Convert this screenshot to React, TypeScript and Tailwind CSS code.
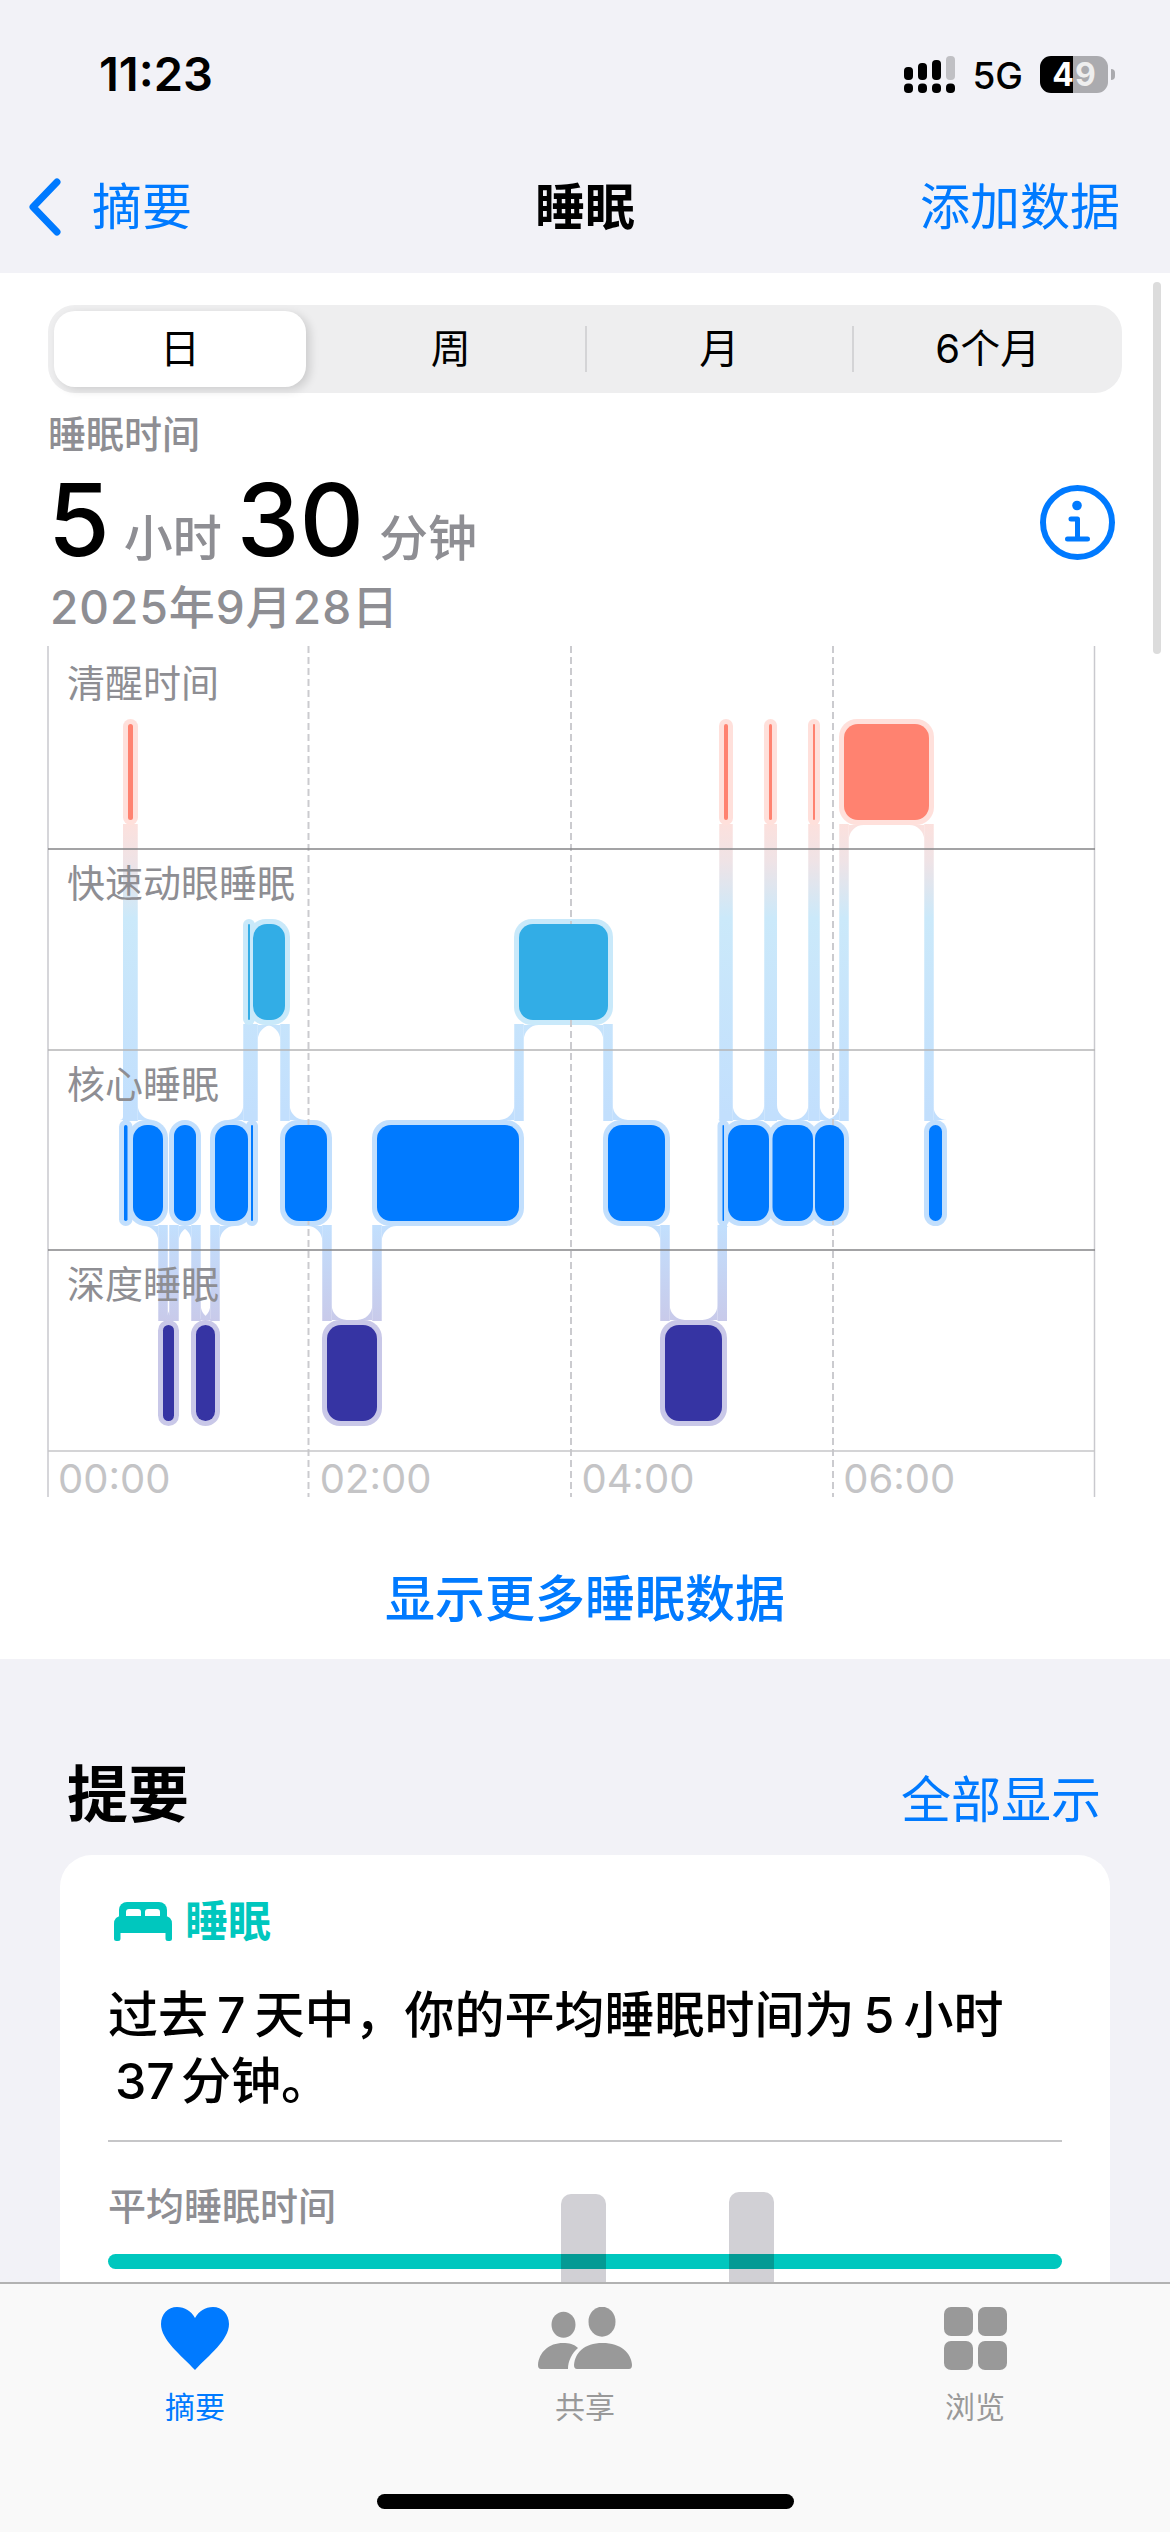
import React from 'react';

type Stage = 'awake' | 'rem' | 'core' | 'deep';

const STAGE_TOP: Record<Stage, number> = { awake: 724, rem: 924, core: 1125, deep: 1325 };
const BAR_H = 96;
const HALO = 5;
const LINK = 4.75;

const SOLID: Record<Stage, string> = {
  awake: '#ff8270',
  rem: '#32ade6',
  core: '#007aff',
  deep: '#3634a3',
};
const HALO_COLOR: Record<Stage, string> = {
  awake: '#ffe0db',
  rem: '#c9e9fa',
  core: '#c2dffd',
  deep: '#c9c8e8',
};

// sleep segments in time order, x positions in page pixels
const segments: [number, number, Stage][] = [
  [124, 127.5, 'core'],
  [128, 133, 'awake'],
  [133, 163, 'core'],
  [163, 174, 'deep'],
  [174, 196, 'core'],
  [196, 215, 'deep'],
  [215, 248, 'core'],
  [248, 250, 'rem'],
  [251, 253, 'core'],
  [253, 285, 'rem'],
  [285, 327, 'core'],
  [327, 377, 'deep'],
  [377, 519, 'core'],
  [519, 608, 'rem'],
  [608, 665, 'core'],
  [665, 722, 'deep'],
  [722.5, 724, 'core'],
  [724, 728, 'awake'],
  [728, 769, 'core'],
  [769, 772, 'awake'],
  [772.5, 813, 'core'],
  [813, 815, 'awake'],
  [815, 844, 'core'],
  [844, 929, 'awake'],
  [929, 942, 'core'],
];

function fillet(x: number, y: number, dx: number, dy: number, r: number) {
  const sweep = dx * dy > 0 ? 0 : 1;
  return `M${x} ${y}L${x + dx * r} ${y}A${r} ${r} 0 0 ${sweep} ${x} ${y + dy * r}Z`;
}

function SleepChart() {
  const links = segments.slice(1).map((b, i) => {
    const a = segments[i];
    const mid = (a[1] + b[0]) / 2;
    const aUpper = STAGE_TOP[a[2]] < STAGE_TOP[b[2]];
    const upper = aUpper ? a : b;
    const lower = aUpper ? b : a;
    const top = STAGE_TOP[upper[2]] + BAR_H + HALO;
    const bottom = STAGE_TOP[lower[2]] - HALO;
    const upperSide = aUpper ? -1 : 1;
    const lowerSide = -upperSide;
    const r1 = Math.min(15, upper[1] - upper[0]);
    const r2 = Math.min(15, lower[1] - lower[0]);
    return {
      x: mid - LINK,
      y: top - 1,
      h: bottom - top + 2,
      d:
        fillet(mid + upperSide * LINK, top, upperSide, 1, r1) +
        fillet(mid + lowerSide * LINK, bottom, lowerSide, -1, r2),
    };
  });

  return (
    <svg width="1170" height="851" viewBox="0 646 1170 851" className="absolute left-[-48px] top-0">
      <defs>
        <linearGradient id="link" gradientUnits="userSpaceOnUse" x1="0" y1="815" x2="0" y2="1330">
          <stop offset="0" stopColor="#ffe0db" />
          <stop offset="0.09" stopColor="#efe3e6" />
          <stop offset="0.2" stopColor="#cbe9fa" />
          <stop offset="0.58" stopColor="#c2dffd" />
          <stop offset="0.8" stopColor="#c2dffd" />
          <stop offset="1" stopColor="#c9c8e8" />
        </linearGradient>
      </defs>
      {links.map((l, i) => (
        <g key={i} fill="url(#link)">
          <rect x={l.x} y={l.y} width={LINK * 2} height={l.h} />
          <path d={l.d} />
        </g>
      ))}
      {segments.map(([x0, x1, stage], i) => {
        const w = x1 - x0 + HALO * 2;
        return (
          <rect
            key={i}
            x={x0 - HALO}
            y={STAGE_TOP[stage] - HALO}
            width={w}
            height={BAR_H + HALO * 2}
            rx={Math.min(w / 2, 18)}
            fill={HALO_COLOR[stage]}
          />
        );
      })}
      {[308.5, 571, 833].map(x => (
        <line key={x} x1={x} x2={x} y1="646" y2="1497" stroke="#cbcbcf" strokeWidth="2" strokeDasharray="7 4" />
      ))}
      <line x1="48" x2="48" y1="646" y2="1497" stroke="#c9c9ce" strokeWidth="1.5" />
      <line x1="1094.5" x2="1094.5" y1="646" y2="1497" stroke="#c9c9ce" strokeWidth="1.5" />
      <line x1="48" x2="1095" y1="849" y2="849" stroke="#858587" strokeWidth="1.3" />
      <line x1="48" x2="1095" y1="1050" y2="1050" stroke="#b4b4b6" strokeWidth="1.6" />
      <line x1="48" x2="1095" y1="1250" y2="1250" stroke="#858587" strokeWidth="1.3" />
      <line x1="48" x2="1095" y1="1451" y2="1451" stroke="#c6c6c8" strokeWidth="1.6" />
      {segments.map(([x0, x1, stage], i) => {
        const w = x1 - x0;
        return (
          <rect
            key={i}
            x={x0}
            y={STAGE_TOP[stage]}
            width={w}
            height={BAR_H}
            rx={Math.min(w / 2, 14)}
            fill={SOLID[stage]}
          />
        );
      })}
    </svg>
  );
}

function SignalIcon() {
  const xs = [0, 14, 28, 42];
  const tops = [11, 7, 4, 0];
  return (
    <svg width="51" height="37" viewBox="0 0 51 37">
      {xs.map((x, i) => (
        <g key={x}>
          <rect x={x} y={tops[i]} width="9" height={24 - tops[i]} rx="4" fill={i === 3 ? '#c0c0c4' : '#000'} />
          <rect x={x} y="27.5" width="9" height="9.5" rx="4" fill="#000" />
        </g>
      ))}
    </svg>
  );
}

function Battery() {
  return (
    <div className="flex items-center">
      <div className="flex h-[37px] w-[68px] items-center justify-center rounded-[11px] bg-[linear-gradient(90deg,#000_0,#000_33px,#ababaf_33px,#ababaf_100%)] text-[32px] leading-none font-bold text-white">
        <span className="mr-[1px]">4</span>
        <span className="text-[#eeeeee]">9</span>
      </div>
      <div className="ml-[3px] h-[11px] w-[4px] rounded-r-full bg-[#ababaf]" />
    </div>
  );
}

function BedIcon() {
  return (
    <svg width="58" height="39" viewBox="0 0 58 39" fill="#00c7be">
      <rect x="5" y="0" width="48" height="22" rx="8" />
      <path d="M12 14V10Q12 7 15 7H24Q27 7 27 10V14Z M31 14V10Q31 7 34 7H43Q46 7 46 10V14Z" fill="#ffffff" />
      <path d="M0 22Q0 14 8 14H50Q58 14 58 22V36.5Q58 39 55.5 39H54Q51.500 39 51.500 36.500V31H6.500V36.500Q6.500 39 4 39H2.500Q0 39 0 36.500Z" />
    </svg>
  );
}

function InfoIcon() {
  return (
    <svg width="75" height="75" viewBox="0 0 75 75" fill="none">
      <circle cx="37.500" cy="37.500" r="34.500" stroke="#007aff" strokeWidth="6" />
      <circle cx="37" cy="20.500" r="4.800" fill="#007aff" />
      <path d="M31 34H37.500V54M27.500 54H47.500" stroke="#007aff" strokeWidth="5" strokeLinecap="round" strokeLinejoin="round" />
    </svg>
  );
}

function TabBar() {
  return (
    <div className="absolute right-0 bottom-0 left-0 h-[250px] border-t-[2px] border-[#b2b2b2] bg-[#f9f9f9]">
      <div className="grid h-[110px] grid-cols-3 pt-[23px] text-[30px] leading-[32px]">
        <div className="flex flex-col items-center text-[#007aff]">
          <svg width="68" height="63" viewBox="0 0 68 63" fill="#007aff">
            <path d="M34 63C20 48 0 33 0 17C0 7 7 0 16 0C24 0 30 4 34 11C38 4 44 0 52 0C61 0 68 7 68 17C68 33 48 48 34 63Z" />
          </svg>
          <span className="mt-[21px]">摘要</span>
        </div>
        <div className="flex flex-col items-center text-[#999999]">
          <svg width="94" height="63" viewBox="0 0 94 63" fill="#999999">
            <ellipse cx="25.500" cy="17.700" rx="12" ry="13" />
            <ellipse cx="64" cy="14.700" rx="13.500" ry="15" />
            <path d="M3 62Q0 62 0 58C1 45 11 36 25 36C31 36 36 37 40 41C34 46 30 54 30 62Z" />
            <path d="M39 62Q36 62 36 58C37 46 46 36 64.500 36C83 36 93 46 94 58Q94 62 91 62Z" />
          </svg>
          <span className="mt-[21px]">共享</span>
        </div>
        <div className="flex flex-col items-center text-[#999999]">
          <div className="grid h-[63px] grid-cols-[29px_29px] grid-rows-[29px_29px] gap-[5px]">
            <div className="rounded-[7px] bg-[#999999]" />
            <div className="rounded-[7px] bg-[#999999]" />
            <div className="rounded-[7px] bg-[#999999]" />
            <div className="rounded-[7px] bg-[#999999]" />
          </div>
          <span className="mt-[21px]">浏览</span>
        </div>
      </div>
      <div className="mx-auto mt-[100px] h-[15px] w-[417px] rounded-full bg-black" />
    </div>
  );
}

const stageLabels = ['清醒时间', '快速动眼睡眠', '核心睡眠', '深度睡眠'];
const hours = ['00:00', '02:00', '04:00', '06:00'];

export default function App() {
  return (
    <div className="relative h-[2532px] w-[1170px] overflow-hidden bg-[#f2f2f7] font-['Inter','Noto_Sans_CJK_SC',sans-serif] text-black">
      {/* status bar */}
      <div className="flex h-[111px] items-end justify-between pr-[55px] pl-[99px]">
        <div className="mb-[10px] text-[47px] leading-[54px] font-semibold">11:23</div>
        <div className="mb-[18px] flex items-center">
          <SignalIcon />
          <span className="relative top-[1px] mr-[17px] ml-[17px] text-[37px] leading-[37px] font-medium">5G</span>
          <Battery />
        </div>
      </div>

      {/* nav */}
      <div className="mt-[59px] grid h-[74px] grid-cols-[1fr_auto_1fr] items-center px-[28px] text-[50px] leading-[74px]">
        <div className="flex items-center text-[#007aff]">
          <svg width="34" height="58" viewBox="0 0 34 58" fill="none">
            <path d="M29 4L5 29L29 54" stroke="#007aff" strokeWidth="7" strokeLinecap="round" strokeLinejoin="round" />
          </svg>
          <span className="ml-[30px]">摘要</span>
        </div>
        <div className="font-bold">睡眠</div>
        <div className="pr-[22px] text-right text-[#007aff]">添加数据</div>
      </div>

      {/* sleep day section */}
      <div className="relative mt-[29px] h-[1386px] bg-white pt-[32px]">
        <div className="absolute top-[9px] right-[9px] h-[372px] w-[8px] rounded-full bg-[#dcdcdc]" />

        <div className="mx-[48px] grid h-[88px] w-[1074px] grid-cols-4 items-center rounded-[27px] bg-[#eeeeef] text-[40px] leading-none">
          <div className="ml-[6px] flex h-[76px] w-[252px] items-center justify-center rounded-[21px] bg-white shadow-[4px_3px_10px_rgba(0,0,0,0.14)]">
            日
          </div>
          <div className="text-center">周</div>
          <div className="border-x-[2px] border-[#d4d4d6] py-[3px] text-center">月</div>
          <div className="text-center">6个月</div>
        </div>

        <div className="mt-[19px] ml-[48px] text-[38px] leading-[44px] font-medium text-[#8e8e93]">睡眠时间</div>

        <div className="mt-[14px] flex items-center pr-[55px] pl-[48px]">
          <div className="flex flex-1 items-baseline font-medium">
            <span className="text-[100px] leading-[100px]">5</span>
            <span className="ml-[14px] text-[49px] text-[#8e8e93]">小时</span>
            <span className="ml-[15px] text-[100px] leading-[100px]">30</span>
            <span className="ml-[15px] text-[49px] text-[#8e8e93]">分钟</span>
          </div>
          <InfoIcon />
        </div>

        <div className="mt-[5px] ml-[50px] text-[46px] leading-[52px] font-medium tracking-[1px] text-[#8e8e93]">2025年9月28日</div>

        <div className="relative mt-[13px] ml-[48px] h-[851px] w-[1047px]">
          <SleepChart />
          <div className="relative flex flex-col pl-[19px] text-[38px] leading-[44px] text-[#8e8e93]">
            {stageLabels.map(label => (
              <div key={label} className="h-[200.5px] pt-[15px]">
                {label}
              </div>
            ))}
          </div>
          <div className="relative mt-[9px] flex text-[40px] leading-[44px] text-[#c4c4c6]">
            {hours.map(h => (
              <div key={h} className="w-[262px] pl-[10px]">
                {h}
              </div>
            ))}
          </div>
        </div>

        <div className="mt-[72px] text-center text-[50px] leading-[60px] font-medium text-[#007aff]">显示更多睡眠数据</div>
      </div>

      {/* summary */}
      <div className="mt-[98px] flex items-center justify-between pr-[69px] pl-[67px]">
        <h2 className="text-[61px] leading-[76px] font-bold">提要</h2>
        <span className="relative top-[5px] text-[50px] leading-[76px] text-[#007aff]">全部显示</span>
      </div>

      <div className="mx-[60px] mt-[22px] rounded-[32px] bg-white px-[48px] pt-[46px]">
        <div className="ml-[6px] flex items-center">
          <BedIcon />
          <span className="ml-[13px] text-[43px] leading-[40px] font-bold text-[#00c7be]">睡眠</span>
        </div>
        <p className="mt-[41px] text-[50px] leading-[66px] font-medium">
          过去<span className="mx-[9px]">7</span>天中，你的平均睡眠时间为<span className="mx-[9px]">5</span>小时
          <br />
          <span className="mr-[6px] ml-[7px]">37</span>分钟。
        </p>
        <div className="mt-[26px] h-[1.500px] bg-[#c6c6c8]" />
        <div className="relative h-[200px]">
          <div className="pt-[42px] text-[38px] leading-[44px] font-medium text-[#8e8e93]">平均睡眠时间</div>
          <div className="mt-[26px] h-[15px] rounded-full bg-[#00c7be]" />
          <div className="absolute top-[52px] left-[453px] h-[110px] w-[45px] rounded-t-[10px] bg-[#d1d0d5]">
            <div className="absolute top-[60px] h-[15px] w-full bg-[#049a94]" />
          </div>
          <div className="absolute top-[50px] left-[621px] h-[110px] w-[45px] rounded-t-[10px] bg-[#d1d0d5]">
            <div className="absolute top-[62px] h-[15px] w-full bg-[#049a94]" />
          </div>
        </div>
      </div>

      <TabBar />
    </div>
  );
}
